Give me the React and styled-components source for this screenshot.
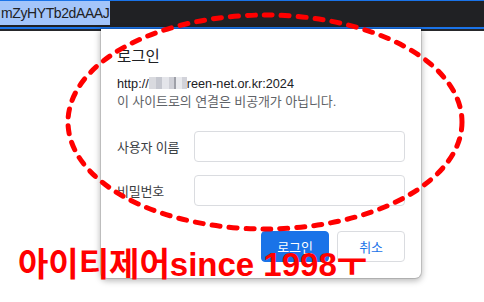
import React from "react";
import styled, { createGlobalStyle } from "styled-components";

const Global = createGlobalStyle`
  html, body { margin: 0; padding: 0; background: #ffffff; }
  body {
    width: 484px; height: 302px; overflow: hidden;
    font-family: "Liberation Sans", "Noto Sans CJK KR", sans-serif;
  }
`;

const Page = styled.div`
  position: relative;
  width: 484px;
  height: 302px;
  overflow: hidden;
  background: #ffffff;
`;

const TopBar = styled.div`
  height: 26px;
  background: #202124;
  border-top: 1px solid #1a73e8;
  border-bottom: 2px solid #1a73e8;
  display: flex;
  align-items: flex-start;
`;

const Selection = styled.span`
  height: 24px;
  padding: 0 1px 0 1px;
  background: #a3c5fa;
  color: #202124;
  font: 14px/24px "Liberation Sans", sans-serif;
  letter-spacing: -0.4px;
`;

const Shade = styled.div`
  height: 2px;
  background: #26272a;
`;

const Dialog = styled.div`
  position: relative;
  margin: -2px 0 0 101px;
  width: 320px;
  height: 249px;
  box-sizing: border-box;
  padding: 18px 16px 16px;
  background: #ffffff;
  border-radius: 0 0 6px 6px;
  box-shadow: 0 0 0 1px rgba(0, 0, 0, 0.12), 0 2px 6px 1px rgba(0, 0, 0, 0.28);
  display: flex;
  flex-direction: column;
`;

const Title = styled.div`
  font-size: 15.5px;
  line-height: 20px;
  color: #202124;
`;

const Info = styled.div`
  margin-top: ${(p) => (p.$muted ? "0" : "8px")};
  font-size: ${(p) => (p.$muted ? "13px" : "12.7px")};
  line-height: 18px;
  color: ${(p) => (p.$muted ? "#5f6368" : "#202124")};
  letter-spacing: ${(p) => (p.$muted ? "-0.1px" : "0")};
  white-space: nowrap;
`;

const Blur = styled.span`
  display: inline-block;
  width: 38px;
  height: 12px;
  vertical-align: -1px;
  background: linear-gradient(
    90deg,
    #d9dadf 0 18%,
    #c5c7cf 18% 34%,
    #e4e5ea 34% 52%,
    #cfd0d7 52% 66%,
    #9ea0a8 66% 72%,
    #e9eaee 72% 86%,
    #d2d3da 86%
  );
  filter: blur(0.7px);
`;

const Form = styled.div`
  margin-top: 20px;
  display: flex;
  flex-direction: column;
  gap: 13px;
`;

const Row = styled.div`
  display: flex;
  align-items: center;
`;

const Label = styled.label`
  width: 77px;
  font-size: 13px;
  color: #3c4043;
  letter-spacing: -0.2px;
`;

const Input = styled.div`
  width: 211px;
  height: 31px;
  box-sizing: border-box;
  border: 1px solid #dadce0;
  border-radius: 4px;
`;

const Actions = styled.div`
  margin-top: auto;
  display: flex;
  justify-content: flex-end;
  gap: 8px;
`;

const Button = styled.button`
  width: 68px;
  height: 31px;
  border-radius: 4px;
  font-family: "Liberation Sans", "Noto Sans CJK KR", sans-serif;
  font-size: 13px;
  letter-spacing: -0.2px;
  padding: 0;
  cursor: pointer;
  border: 1px solid ${(p) => (p.$primary ? "#1a73e8" : "#dadce0")};
  background: ${(p) => (p.$primary ? "#1a73e8" : "#ffffff")};
  color: ${(p) => (p.$primary ? "#ffffff" : "#1a73e8")};
`;

const Overlay = styled.svg`
  position: absolute;
  left: 0;
  top: 0;
  pointer-events: none;
`;

const Caption = styled.div`
  position: absolute;
  left: 18px;
  top: 247px;
  font-family: "Liberation Sans", "Noto Sans CJK KR", sans-serif;
  font-weight: 700;
  font-size: 33px;
  line-height: 36px;
  color: #ff0000;
  white-space: nowrap;
`;

export default function App() {
  return (
    <Page>
      <Global />
      <TopBar>
        <Selection>mZyHYTb2dAAAJ</Selection>
      </TopBar>
      <Shade />
      <Dialog>
        <Title>로그인</Title>
        <Info>
          http://<Blur />reen-net.or.kr:2024
        </Info>
        <Info $muted>이 사이트로의 연결은 비공개가 아닙니다.</Info>
        <Form>
          <Row>
            <Label>사용자 이름</Label>
            <Input />
          </Row>
          <Row>
            <Label>비밀번호</Label>
            <Input />
          </Row>
        </Form>
        <Actions>
          <Button $primary>로그인</Button>
          <Button>취소</Button>
        </Actions>
      </Dialog>
      <Overlay width="484" height="302" viewBox="0 0 484 302">
        <ellipse
          cx="265"
          cy="122"
          rx="197"
          ry="107"
          fill="none"
          stroke="#ff0000"
          strokeWidth="5"
          strokeDasharray="8 9"
          strokeLinecap="round"
        />
      </Overlay>
      <Caption>아이티제어since 1998ㅜ</Caption>
    </Page>
  );
}
